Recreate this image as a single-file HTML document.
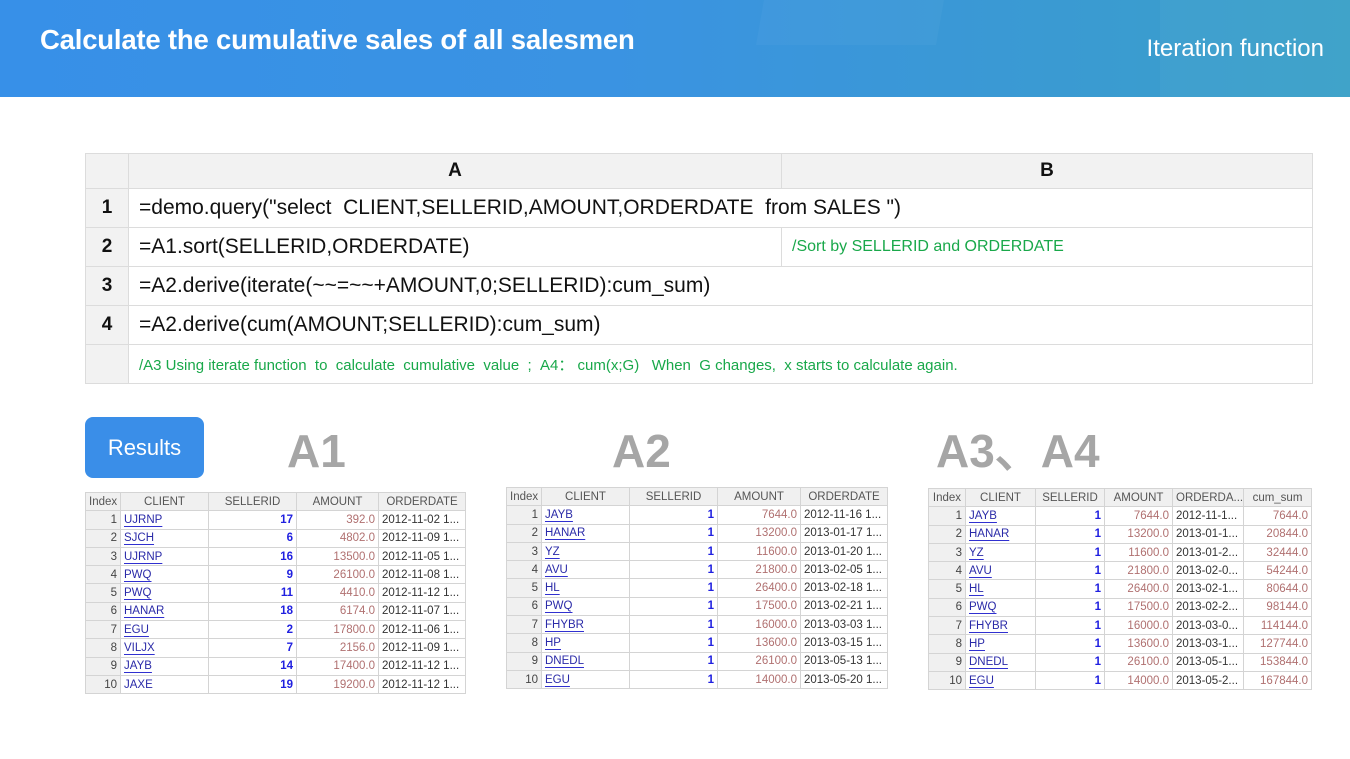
<!DOCTYPE html>
<html><head><meta charset="utf-8"><style>
*{margin:0;padding:0;box-sizing:border-box}
body{width:1350px;height:759px;background:#fff;position:relative;overflow:hidden;font-family:"Liberation Sans",Arial,sans-serif}
.hdr{position:absolute;left:0;top:0;width:1350px;height:97px;background:linear-gradient(90deg,#3790e8 0%,#3a93e2 45%,#3a98d6 70%,#3aa0c8 100%);overflow:hidden}
.hdr .s{position:absolute;background:rgba(255,255,255,0.035)}
.title{position:absolute;left:40px;top:24px;color:#fff;font-weight:bold;font-size:27.5px;letter-spacing:-0.2px}
.sub{position:absolute;right:26px;top:35px;color:#fff;font-size:24px}
.code{position:absolute;left:85px;top:153px;border-collapse:collapse;table-layout:fixed;width:1227px}
.code td{border:1px solid #dcdcdc;height:39px;font-size:21px;color:#111;padding-left:10px;white-space:nowrap;overflow:hidden}
.code tr:first-child td{height:35px;background:#f2f2f2;font-weight:bold;text-align:center;padding:0;font-size:19px}
.code td.n{background:#f2f2f2;font-weight:bold;text-align:center;padding:0;width:43px;font-size:19px}
.code td.cm{color:#19a84a;font-size:15px}
.code td.cm2{color:#19a84a;font-size:16px}
.btn{position:absolute;left:85px;top:417px;width:119px;height:61px;background:#3a8ee8;border-radius:8px;color:#fff;font-size:22px;text-align:center;line-height:61px}
.big{position:absolute;color:#a6a6a6;font-weight:bold;font-size:46px;top:424px;line-height:54px;height:54px}
table.d{position:absolute;border-collapse:collapse;table-layout:fixed;font-size:11.5px}
table.d td{border:1px solid #d4d4d4;height:18.3px;padding:0 3px;white-space:nowrap;overflow:hidden}
table.d tr:first-child td{background:#f0f0f0;color:#555;text-align:center}
table.d td:first-child{background:#f0f0f0;text-align:right;color:#444}
table.d tr:first-child td:first-child{text-align:center}
.c{color:#2a2aa8;text-decoration:underline;text-decoration-color:#3030d0;text-underline-offset:3px}
.i{color:#2020e0;text-align:right;font-weight:bold}
.a{color:#b07070;text-align:right}
.t{color:#333}
</style></head><body>
<div class="hdr">
<div class="s" style="left:760px;top:0;width:180px;height:45px;transform:skewX(-10deg)"></div>
<div class="s" style="left:1160px;top:0;width:190px;height:97px"></div>
<div class="title">Calculate the cumulative sales of all salesmen</div>
<div class="sub">Iteration function</div>
</div>

<table class="code">
<colgroup><col style="width:43px"><col style="width:653px"><col style="width:531px"></colgroup>
<tr><td></td><td>A</td><td>B</td></tr>
<tr><td class="n">1</td><td colspan="2">=demo.query("select &nbsp;CLIENT,SELLERID,AMOUNT,ORDERDATE &nbsp;from SALES ")</td></tr>
<tr><td class="n">2</td><td>=A1.sort(SELLERID,ORDERDATE)</td><td class="cm2">/Sort by SELLERID and ORDERDATE</td></tr>
<tr><td class="n">3</td><td colspan="2">=A2.derive(iterate(~~=~~+AMOUNT,0;SELLERID):cum_sum)</td></tr>
<tr><td class="n">4</td><td colspan="2">=A2.derive(cum(AMOUNT;SELLERID):cum_sum)</td></tr>
<tr><td class="n"></td><td colspan="2" class="cm">/A3 Using iterate function &nbsp;to &nbsp;calculate &nbsp;cumulative &nbsp;value &nbsp;; &nbsp;A4： cum(x;G) &nbsp;&nbsp;When &nbsp;G changes, &nbsp;x starts to calculate again.</td></tr>
</table>

<div class="btn">Results</div>
<div class="big" style="left:287px">A1</div>
<div class="big" style="left:612px">A2</div>
<div class="big" style="left:936px">A3、A4</div>

<table class="d" style="left:85px;top:492px;width:380px">
<colgroup><col style="width:35px"><col style="width:88px"><col style="width:88px"><col style="width:82px"><col style="width:87px"></colgroup>
<tr><td>Index</td><td>CLIENT</td><td>SELLERID</td><td>AMOUNT</td><td>ORDERDATE</td></tr>
<tr><td>1</td><td class="c">UJRNP</td><td class="i">17</td><td class="a">392.0</td><td class="t">2012-11-02 1...</td></tr>
<tr><td>2</td><td class="c">SJCH</td><td class="i">6</td><td class="a">4802.0</td><td class="t">2012-11-09 1...</td></tr>
<tr><td>3</td><td class="c">UJRNP</td><td class="i">16</td><td class="a">13500.0</td><td class="t">2012-11-05 1...</td></tr>
<tr><td>4</td><td class="c">PWQ</td><td class="i">9</td><td class="a">26100.0</td><td class="t">2012-11-08 1...</td></tr>
<tr><td>5</td><td class="c">PWQ</td><td class="i">11</td><td class="a">4410.0</td><td class="t">2012-11-12 1...</td></tr>
<tr><td>6</td><td class="c">HANAR</td><td class="i">18</td><td class="a">6174.0</td><td class="t">2012-11-07 1...</td></tr>
<tr><td>7</td><td class="c">EGU</td><td class="i">2</td><td class="a">17800.0</td><td class="t">2012-11-06 1...</td></tr>
<tr><td>8</td><td class="c">VILJX</td><td class="i">7</td><td class="a">2156.0</td><td class="t">2012-11-09 1...</td></tr>
<tr><td>9</td><td class="c">JAYB</td><td class="i">14</td><td class="a">17400.0</td><td class="t">2012-11-12 1...</td></tr>
<tr><td>10</td><td class="c" style="text-decoration:none">JAXE</td><td class="i">19</td><td class="a">19200.0</td><td class="t">2012-11-12 1...</td></tr>
</table>

<table class="d" style="left:506px;top:487px;width:381px">
<colgroup><col style="width:35px"><col style="width:88px"><col style="width:88px"><col style="width:83px"><col style="width:87px"></colgroup>
<tr><td>Index</td><td>CLIENT</td><td>SELLERID</td><td>AMOUNT</td><td>ORDERDATE</td></tr>
<tr><td>1</td><td class="c">JAYB</td><td class="i">1</td><td class="a">7644.0</td><td class="t">2012-11-16 1...</td></tr>
<tr><td>2</td><td class="c">HANAR</td><td class="i">1</td><td class="a">13200.0</td><td class="t">2013-01-17 1...</td></tr>
<tr><td>3</td><td class="c">YZ</td><td class="i">1</td><td class="a">11600.0</td><td class="t">2013-01-20 1...</td></tr>
<tr><td>4</td><td class="c">AVU</td><td class="i">1</td><td class="a">21800.0</td><td class="t">2013-02-05 1...</td></tr>
<tr><td>5</td><td class="c">HL</td><td class="i">1</td><td class="a">26400.0</td><td class="t">2013-02-18 1...</td></tr>
<tr><td>6</td><td class="c">PWQ</td><td class="i">1</td><td class="a">17500.0</td><td class="t">2013-02-21 1...</td></tr>
<tr><td>7</td><td class="c">FHYBR</td><td class="i">1</td><td class="a">16000.0</td><td class="t">2013-03-03 1...</td></tr>
<tr><td>8</td><td class="c">HP</td><td class="i">1</td><td class="a">13600.0</td><td class="t">2013-03-15 1...</td></tr>
<tr><td>9</td><td class="c">DNEDL</td><td class="i">1</td><td class="a">26100.0</td><td class="t">2013-05-13 1...</td></tr>
<tr><td>10</td><td class="c">EGU</td><td class="i">1</td><td class="a">14000.0</td><td class="t">2013-05-20 1...</td></tr>
</table>

<table class="d" style="left:928px;top:488px;width:383px">
<colgroup><col style="width:37px"><col style="width:70px"><col style="width:69px"><col style="width:68px"><col style="width:71px"><col style="width:68px"></colgroup>
<tr><td>Index</td><td>CLIENT</td><td>SELLERID</td><td>AMOUNT</td><td>ORDERDA...</td><td>cum_sum</td></tr>
<tr><td>1</td><td class="c">JAYB</td><td class="i">1</td><td class="a">7644.0</td><td class="t">2012-11-1...</td><td class="a">7644.0</td></tr>
<tr><td>2</td><td class="c">HANAR</td><td class="i">1</td><td class="a">13200.0</td><td class="t">2013-01-1...</td><td class="a">20844.0</td></tr>
<tr><td>3</td><td class="c">YZ</td><td class="i">1</td><td class="a">11600.0</td><td class="t">2013-01-2...</td><td class="a">32444.0</td></tr>
<tr><td>4</td><td class="c">AVU</td><td class="i">1</td><td class="a">21800.0</td><td class="t">2013-02-0...</td><td class="a">54244.0</td></tr>
<tr><td>5</td><td class="c">HL</td><td class="i">1</td><td class="a">26400.0</td><td class="t">2013-02-1...</td><td class="a">80644.0</td></tr>
<tr><td>6</td><td class="c">PWQ</td><td class="i">1</td><td class="a">17500.0</td><td class="t">2013-02-2...</td><td class="a">98144.0</td></tr>
<tr><td>7</td><td class="c">FHYBR</td><td class="i">1</td><td class="a">16000.0</td><td class="t">2013-03-0...</td><td class="a">114144.0</td></tr>
<tr><td>8</td><td class="c">HP</td><td class="i">1</td><td class="a">13600.0</td><td class="t">2013-03-1...</td><td class="a">127744.0</td></tr>
<tr><td>9</td><td class="c">DNEDL</td><td class="i">1</td><td class="a">26100.0</td><td class="t">2013-05-1...</td><td class="a">153844.0</td></tr>
<tr><td>10</td><td class="c">EGU</td><td class="i">1</td><td class="a">14000.0</td><td class="t">2013-05-2...</td><td class="a">167844.0</td></tr>
</table>
</body></html>
